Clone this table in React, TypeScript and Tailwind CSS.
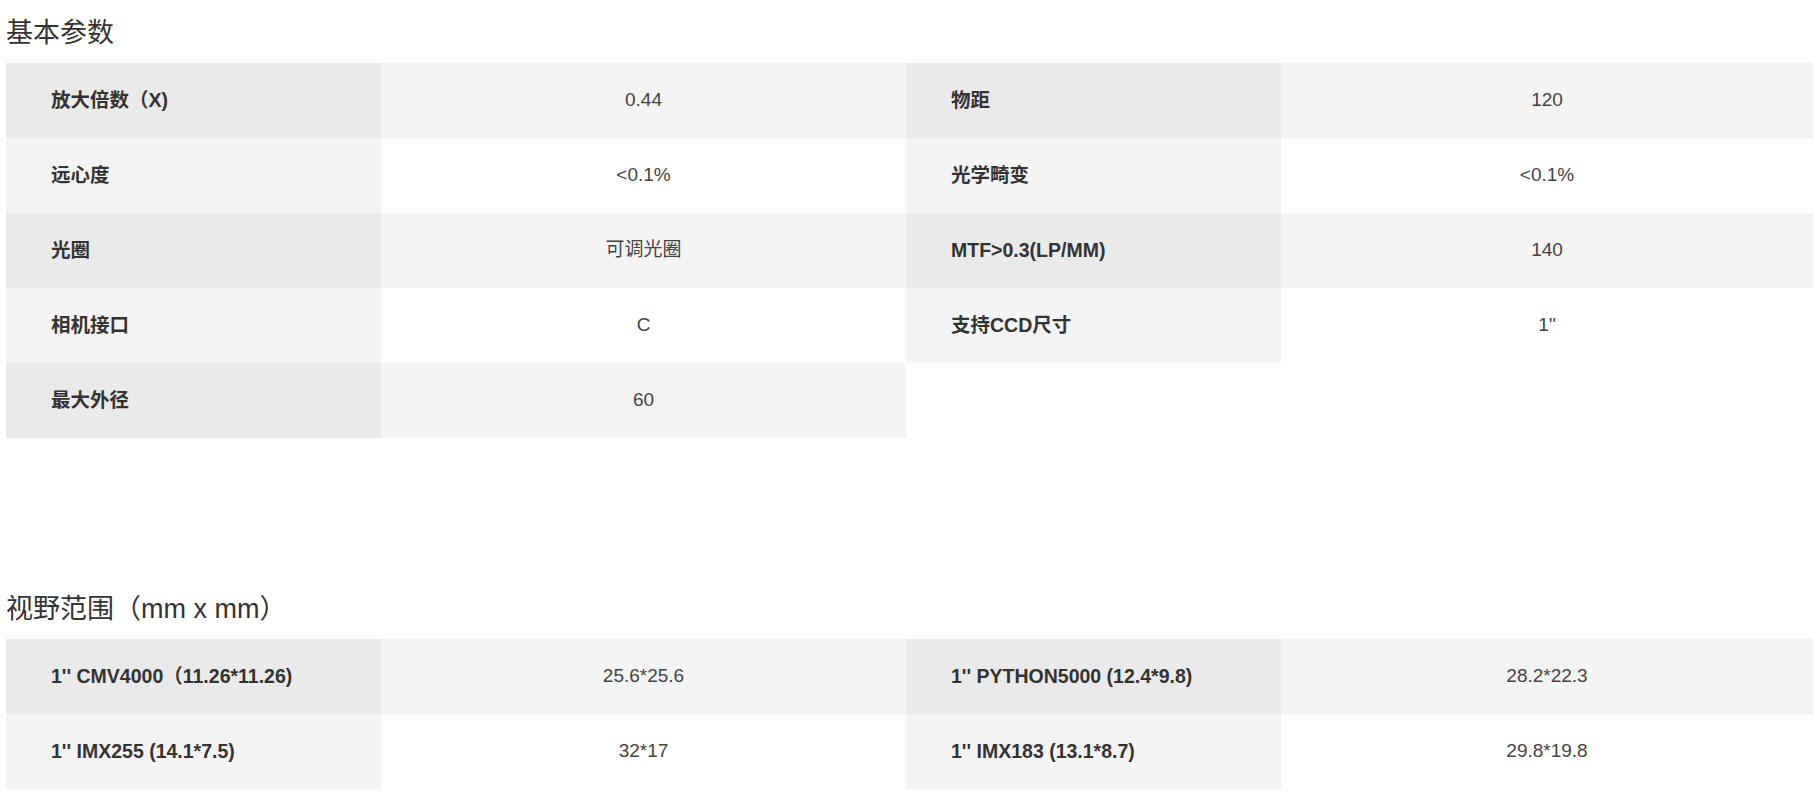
const basic: [string, string][] = [
  ['放大倍数（X)', '0.44'],
  ['物距', '120'],
  ['远心度', '<0.1%'],
  ['光学畸变', '<0.1%'],
  ['光圈', '可调光圈'],
  ['MTF>0.3(LP/MM)', '140'],
  ['相机接口', 'C'],
  ['支持CCD尺寸', '1"'],
  ['最大外径', '60'],
];

const fov: [string, string][] = [
  ["1'' CMV4000（11.26*11.26)", '25.6*25.6'],
  ["1'' PYTHON5000 (12.4*9.8)", '28.2*22.3'],
  ["1'' IMX255 (14.1*7.5)", '32*17'],
  ["1'' IMX183 (13.1*8.7)", '29.8*19.8'],
];

function ParamTable({ items }: { items: [string, string][] }) {
  return (
    <div className="grid grid-cols-[375px_525px_375px_1fr]">
      {items.map(([label, value], idx) => {
        const row = Math.floor(idx / 2);
        const even = row % 2 === 0;
        return [
          <div
            key={`l${idx}`}
            className={`h-[75px] flex items-center pl-[45px] text-[19.5px] font-bold text-[#333] ${even ? 'bg-[#eaeaea]' : 'bg-[#f4f4f4]'}`}
          >
            {label}
          </div>,
          <div
            key={`v${idx}`}
            className={`h-[75px] flex items-center justify-center text-[#444] ${even ? 'bg-[#f4f4f4]' : 'bg-white'}`}
          >
            {value}
          </div>,
        ];
      })}
    </div>
  );
}

export default function App() {
  return (
    <div
      className="bg-white pl-[6px] pt-[13px] text-[19px] min-h-[799px]"
      style={{ fontFamily: '"Liberation Sans", "Noto Sans CJK SC", sans-serif' }}
    >
      {/* 基本参数 */}
      <h3 className="text-[27px] leading-[40px] text-[#333] mb-[10px] font-normal">基本参数</h3>
      <ParamTable items={basic} />

      {/* 视野范围 */}
      <h3 className="text-[27px] leading-[40px] text-[#333] mt-[151px] mb-[10px] font-normal">
        视野范围（mm x mm）
      </h3>
      <ParamTable items={fov} />
    </div>
  );
}
